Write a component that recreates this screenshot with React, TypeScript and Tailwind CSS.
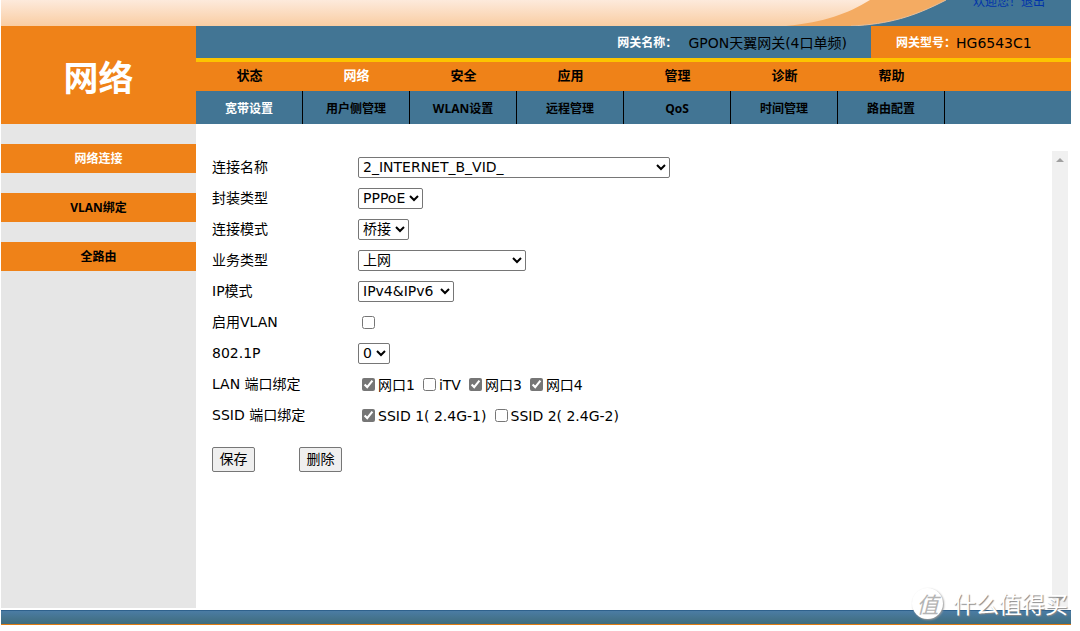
import type { ReactNode } from "react";

const mainTabs = ["状态", "网络", "安全", "应用", "管理", "诊断", "帮助"];
const subTabs = ["宽带设置", "用户侧管理", "WLAN设置", "远程管理", "QoS", "时间管理", "路由配置"];
const sideLinks = ["网络连接", "VLAN绑定", "全路由"];

const selectBase =
  "h-[21px] rounded-[2px] border border-[#767676] bg-white pb-[2px] text-[14px] leading-[18px] text-black";

function Row({ label, htmlFor, children }: { label: string; htmlFor?: string; children: ReactNode }) {
  return (
    <div className="flex h-[31px] items-center">
      {htmlFor ? (
        <label htmlFor={htmlFor} className="w-[146px] shrink-0">
          {label}
        </label>
      ) : (
        <span className="w-[146px] shrink-0">{label}</span>
      )}
      {children}
    </div>
  );
}

function SelectRow({ id, label, value, width }: { id: string; label: string; value: string; width: string }) {
  return (
    <Row label={label} htmlFor={id}>
      <select id={id} className={`${selectBase} ${width}`} defaultValue={value}>
        <option>{value}</option>
      </select>
    </Row>
  );
}

function Check({ label, checked }: { label: string; checked?: boolean }) {
  return (
    <label className="flex items-center gap-[3px] whitespace-pre">
      <input type="checkbox" defaultChecked={checked} className="size-[13px] accent-[#767676]" />
      <span className="pt-px">{label}</span>
    </label>
  );
}

function Swoosh() {
  return (
    <svg viewBox="0 0 290 26" className="h-[26px] w-[290px] shrink-0" aria-hidden="true">
      <defs>
        <linearGradient id="peach" x1="0" y1="0" x2="0" y2="26" gradientUnits="userSpaceOnUse">
          <stop offset="0" stopColor="#fdeadc" />
          <stop offset="1" stopColor="#f9cda2" />
        </linearGradient>
      </defs>
      <rect width="290" height="26" fill="#427594" />
      <path d="M0 0H165C132 17 108 24 70 26H0Z" fill="#f4ab62" />
      <path d="M0 0H89C66 14 44 22 5 26H0Z" fill="url(#peach)" />
      <path d="M165 0C132 17 108 24 70 26" fill="none" stroke="#e9c09a" />
    </svg>
  );
}

export default function App() {
  return (
    <div className="relative bg-white pr-[9px] pl-px font-['DejaVu_Sans','Noto_Sans_CJK_SC',sans-serif] text-[14px] text-black">
      <header>
        <div className="relative flex h-[26px] overflow-hidden bg-[#427594]">
          <div className="flex-1 bg-linear-to-b from-[#fdeadc] to-[#f9cda2]" />
          <Swoosh />
          <div className="absolute -top-2 right-[26px] flex items-center text-[12px] leading-5 whitespace-nowrap text-[#0033aa]">
            <span>欢迎您！</span>
            <a href="#logout">退出</a>
          </div>
        </div>
        <div className="flex">
          <h1 className="flex h-[98px] w-[195px] shrink-0 items-center justify-center bg-[#ef8218] pt-2 text-[35px] font-bold text-white">
            网络
          </h1>
          <div className="min-w-0 flex-1">
            <div className="flex h-8 bg-[#427594]">
              <div className="flex flex-1 items-center justify-end pt-[2px] pr-6">
                <span className="pr-[3px] text-[12px] font-bold text-white">网关名称：</span>
                <span className="pl-2">GPON天翼网关(4口单频)</span>
              </div>
              <div className="flex w-[200px] items-center bg-[#ef8218] pt-[2px] pl-[25px]">
                <span className="text-[12px] font-bold text-white">网关型号：</span>
                <span>HG6543C1</span>
              </div>
            </div>
            <nav className="flex h-[33px] border-t-4 border-[#fdc400] bg-[#ef8218] font-['Open_Sans','Noto_Sans_CJK_SC',sans-serif] text-[13px] font-bold">
              {mainTabs.map((t) => (
                <a
                  key={t}
                  href="#main"
                  className={`flex w-[107px] items-center justify-center pb-[2px] ${t === "网络" ? "text-white" : ""}`}
                >
                  {t}
                </a>
              ))}
            </nav>
            <nav className="flex h-[33px] bg-[#427594] font-['Open_Sans','Noto_Sans_CJK_SC',sans-serif] text-[12px] font-bold">
              {subTabs.map((t, i) => (
                <a
                  key={t}
                  href="#sub"
                  className={`flex w-[107px] items-center justify-center border-r border-black pt-[2px] ${i === 0 ? "text-white" : ""}`}
                >
                  {t}
                </a>
              ))}
            </nav>
          </div>
        </div>
      </header>

      <div className="flex min-h-[484px]">
        <aside className="w-[195px] shrink-0 bg-[#e6e6e6] pt-5">
          <nav className="flex flex-col gap-5 font-['Open_Sans','Noto_Sans_CJK_SC',sans-serif] text-[12px] font-bold">
            {sideLinks.map((t, i) => (
              <a
                key={t}
                href="#side"
                className={`flex h-[29px] items-center justify-center bg-[#ef8218] pt-px ${i === 0 ? "text-white" : ""}`}
              >
                {t}
              </a>
            ))}
          </nav>
        </aside>

        <main className="flex-1 pt-7 pl-4">
          <form onSubmit={(e) => e.preventDefault()}>
            <SelectRow id="name" label="连接名称" value="2_INTERNET_B_VID_" width="w-[312px]" />
            <SelectRow id="encap" label="封装类型" value="PPPoE" width="w-[65px]" />
            <SelectRow id="mode" label="连接模式" value="桥接" width="w-[51px]" />
            <SelectRow id="service" label="业务类型" value="上网" width="w-[168px]" />
            <SelectRow id="ip" label="IP模式" value="IPv4&IPv6" width="w-24" />
            <Row label="启用VLAN" htmlFor="vlan">
              <input id="vlan" type="checkbox" className="ml-1 size-[13px] accent-[#767676]" />
            </Row>
            <SelectRow id="priority" label="802.1P" value="0" width="w-8" />
            <Row label="LAN 端口绑定">
              <div className="flex gap-2 pl-1">
                <Check label="网口1" checked />
                <Check label="iTV" />
                <Check label="网口3" checked />
                <Check label="网口4" checked />
              </div>
            </Row>
            <Row label="SSID 端口绑定">
              <div className="flex gap-2 pl-1">
                <Check label="SSID 1( 2.4G-1)" checked />
                <Check label="SSID 2( 2.4G-2)" />
              </div>
            </Row>
            <div className="flex gap-11 pt-4">
              <button type="submit" className="h-[25px] w-[43px] rounded-[2px] border border-[#767676] bg-[#efefef]">
                保存
              </button>
              <button type="button" className="h-[25px] w-[43px] rounded-[2px] border border-[#767676] bg-[#efefef]">
                删除
              </button>
            </div>
          </form>
        </main>

        <div className="mt-[27px] mr-[3px] flex w-4 flex-col items-center justify-between bg-[#f0f0f0] py-[7px]">
          <svg viewBox="0 0 8 4" className="h-1 w-2" aria-hidden="true">
            <path d="M0 4 4 0 8 4Z" fill="#a0a0a0" />
          </svg>
          <svg viewBox="0 0 8 4" className="h-1 w-2" aria-hidden="true">
            <path d="M0 0 4 4 8 0Z" fill="#a0a0a0" />
          </svg>
        </div>
      </div>

      <footer className="mt-[2px] h-[15px] border-t border-b border-t-[#2f618c] border-b-[#e07b12] bg-linear-to-b from-[#4b7ca4] to-[#3f6c7c]" />

      <div className="absolute right-3 bottom-[6px] flex items-center gap-[10px] font-['Noto_Sans_CJK_SC',sans-serif] whitespace-nowrap text-white">
        <span className="flex size-[31px] items-center justify-center rounded-full bg-white text-[22px] leading-none text-[#b4b4b4] italic shadow-[1px_1px_2px_#999999]">
          值
        </span>
        <span className="text-[23px] leading-8 [text-shadow:1px_1px_1px_#888888]">什么值得买</span>
      </div>
    </div>
  );
}
